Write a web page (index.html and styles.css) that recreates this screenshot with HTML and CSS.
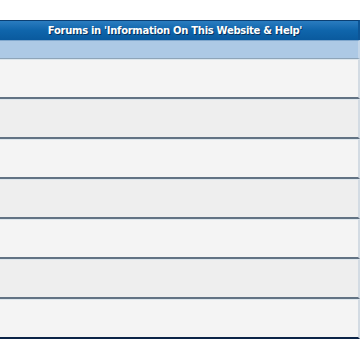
FILE: index.html
```html
<!DOCTYPE html>
<html lang="en">
<head>
    <meta charset="UTF-8">
    <meta name="viewport" content="width=device-width, initial-scale=1.0">
    <title>Forums</title>
    <link rel="stylesheet" href="styles.css">
</head>
<body>
    <div class="forum-box">
        <table class="forum-table">
            <thead>
                <tr class="cat-head"><th>Forums in 'Information On This Website &amp; Help'</th></tr>
                <tr class="sub-head"><td></td></tr>
            </thead>
            <tbody>
                <tr class="row-a"><td></td></tr>
                <tr class="row-b"><td></td></tr>
                <tr class="row-a"><td></td></tr>
                <tr class="row-b"><td></td></tr>
                <tr class="row-a"><td></td></tr>
                <tr class="row-b"><td></td></tr>
                <tr class="row-a last"><td></td></tr>
            </tbody>
        </table>
    </div>
</body>
</html>
```

FILE: styles.css
```css
body {
    margin: 0;
    padding: 20px 0 0 0;
    background-color: #ffffff;
    font-family: "DejaVu Sans", Verdana, sans-serif;
    overflow: hidden;
}

.forum-box {
    margin-left: -8px;
    width: 368px;
}

.forum-table {
    width: 100%;
    border-collapse: separate;
    border-spacing: 0;
}

.forum-table td,
.forum-table th {
    padding: 0;
    border-right: 2px solid #d3dbe3;
}

.cat-head th {
    height: 19px;
    border-top: 1px solid #0b3f73;
    background: linear-gradient(#2a7cc0, #0f65ab 50%, #0a5a9e);
    border-right-color: #0d5596;
    color: #ffffff;
    font-size: 10px;
    font-weight: bold;
    text-align: center;
    text-shadow: 1px 1px 0 #06335e;
    letter-spacing: -0.3px;
}

.sub-head td {
    height: 17px;
    border-top: 1px solid #7fa6cc;
    border-bottom: 1px solid #8ea4b8;
    background-color: #adc9e5;
    border-right-color: #c4d6e8;
}

.row-a td,
.row-b td {
    height: 37px;
    border-top: 1px solid #dde6ec;
    border-bottom: 2px solid #627384;
}

.row-a td {
    background-color: #f4f4f4;
}

.row-b td {
    background-color: #eeeeee;
}

.row-a.last td {
    border-bottom-color: #0b2447;
}
```
